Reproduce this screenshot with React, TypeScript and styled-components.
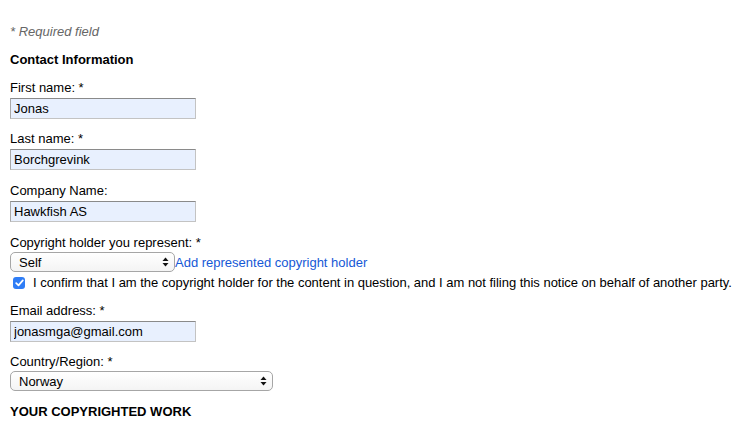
import React from "react";
import styled, { createGlobalStyle } from "styled-components";

const Global = createGlobalStyle`
  html, body { margin: 0; padding: 0; background: #fff; }
  body { font-family: "Liberation Sans", Arial, sans-serif; font-size: 13px; color: #000; }
`;

const Page = styled.form`
  padding: 24px 10px 0 10px;
  display: flex;
  flex-direction: column;
  line-height: 15px;
`;

const Note = styled.div`
  font-style: italic;
  color: #666;
  margin-bottom: 13px;
`;

const SectionTitle = styled.div`
  font-weight: bold;
  margin-bottom: 13px;
`;

const Field = styled.div<{ $gap?: number }>`
  display: flex;
  flex-direction: column;
  align-items: flex-start;
  margin-bottom: ${(p) => p.$gap ?? 13}px;
`;

const Label = styled.label<{ $gap?: number }>`
  display: block;
  margin-bottom: ${(p) => p.$gap ?? 3}px;
`;

const TextInput = styled.input`
  box-sizing: border-box;
  width: 186px;
  height: 21px;
  margin: 0;
  padding: 0 3px;
  font-family: "Liberation Sans", Arial, sans-serif;
  font-size: 13px;
  color: #000;
  background: #e8f0fe;
  border: 1px solid #c3c3c3;
  border-top-color: #8a8a8a;
  border-left-color: #a9a9a9;
  outline: none;
`;

const SelectWrap = styled.div<{ $width: number }>`
  position: relative;
  width: ${(p) => p.$width}px;
  height: 20px;
`;

const Select = styled.select`
  appearance: none;
  -webkit-appearance: none;
  box-sizing: border-box;
  width: 100%;
  height: 20px;
  margin: 0;
  padding: 0 20px 0 8px;
  font-family: "Liberation Sans", Arial, sans-serif;
  font-size: 13px;
  color: #000;
  background: linear-gradient(#ffffff, #f4f4f4);
  border: 1px solid #a6a6a6;
  border-radius: 5px;
  outline: none;
`;

const Arrow = styled.svg`
  position: absolute;
  right: 6px;
  top: 5px;
  width: 7px;
  height: 10px;
  pointer-events: none;
`;

const Row = styled.div`
  display: flex;
  align-items: center;
`;

const Link = styled.a`
  color: #1558d6;
  text-decoration: none;
  cursor: pointer;
`;

const CheckRow = styled.label`
  display: flex;
  align-items: center;
  margin-top: 3px;
  padding-left: 3px;
  white-space: nowrap;
  letter-spacing: -0.02px;
`;

const CheckBox = styled.span`
  box-sizing: border-box;
  flex: none;
  width: 12px;
  height: 12px;
  border-radius: 3px;
  background: #2f7df6;
  display: inline-flex;
  align-items: center;
  justify-content: center;
  margin-right: 8px;
`;

const HiddenCheck = styled.input`
  position: absolute;
  opacity: 0;
  width: 0;
  height: 0;
  margin: 0;
`;

const UpDown = () => (
  <Arrow viewBox="0 0 7 10">
    <path d="M3.5 0.5 L6.5 4 L0.5 4 Z" fill="#111" />
    <path d="M3.5 9.5 L6.5 6 L0.5 6 Z" fill="#111" />
  </Arrow>
);

export default function App() {
  return (
    <>
      <Global />
      <Page onSubmit={(e) => e.preventDefault()}>
        <Note>* Required field</Note>
        <SectionTitle>Contact Information</SectionTitle>

        <Field $gap={12}>
          <Label>First name: *</Label>
          <TextInput defaultValue="Jonas" />
        </Field>
        <Field>
          <Label>Last name: *</Label>
          <TextInput defaultValue="Borchgrevink" />
        </Field>
        <Field>
          <Label>Company Name:</Label>
          <TextInput defaultValue="Hawkfish AS" />
        </Field>

        <Field>
          <Label $gap={2}>Copyright holder you represent: *</Label>
          <Row>
            <SelectWrap $width={165}>
              <Select defaultValue="Self">
                <option>Self</option>
              </Select>
              <UpDown />
            </SelectWrap>
            <Link>Add represented copyright holder</Link>
          </Row>
          <CheckRow>
            <HiddenCheck type="checkbox" defaultChecked />
            <CheckBox>
              <svg width="9" height="8" viewBox="0 0 9 8">
                <path d="M1.2 4.2 L3.5 6.4 L7.8 1.4" fill="none" stroke="#fff" strokeWidth="1.7" strokeLinecap="round" strokeLinejoin="round" />
              </svg>
            </CheckBox>
            I confirm that I am the copyright holder for the content in question, and I am not filing this notice on behalf of another party.
          </CheckRow>
        </Field>

        <Field $gap={12}>
          <Label>Email address: *</Label>
          <TextInput defaultValue="jonasmga@gmail.com" />
        </Field>

        <Field>
          <Label $gap={2}>Country/Region: *</Label>
          <SelectWrap $width={263}>
            <Select defaultValue="Norway">
              <option>Norway</option>
            </Select>
            <UpDown />
          </SelectWrap>
        </Field>

        <SectionTitle>YOUR COPYRIGHTED WORK</SectionTitle>
      </Page>
    </>
  );
}
